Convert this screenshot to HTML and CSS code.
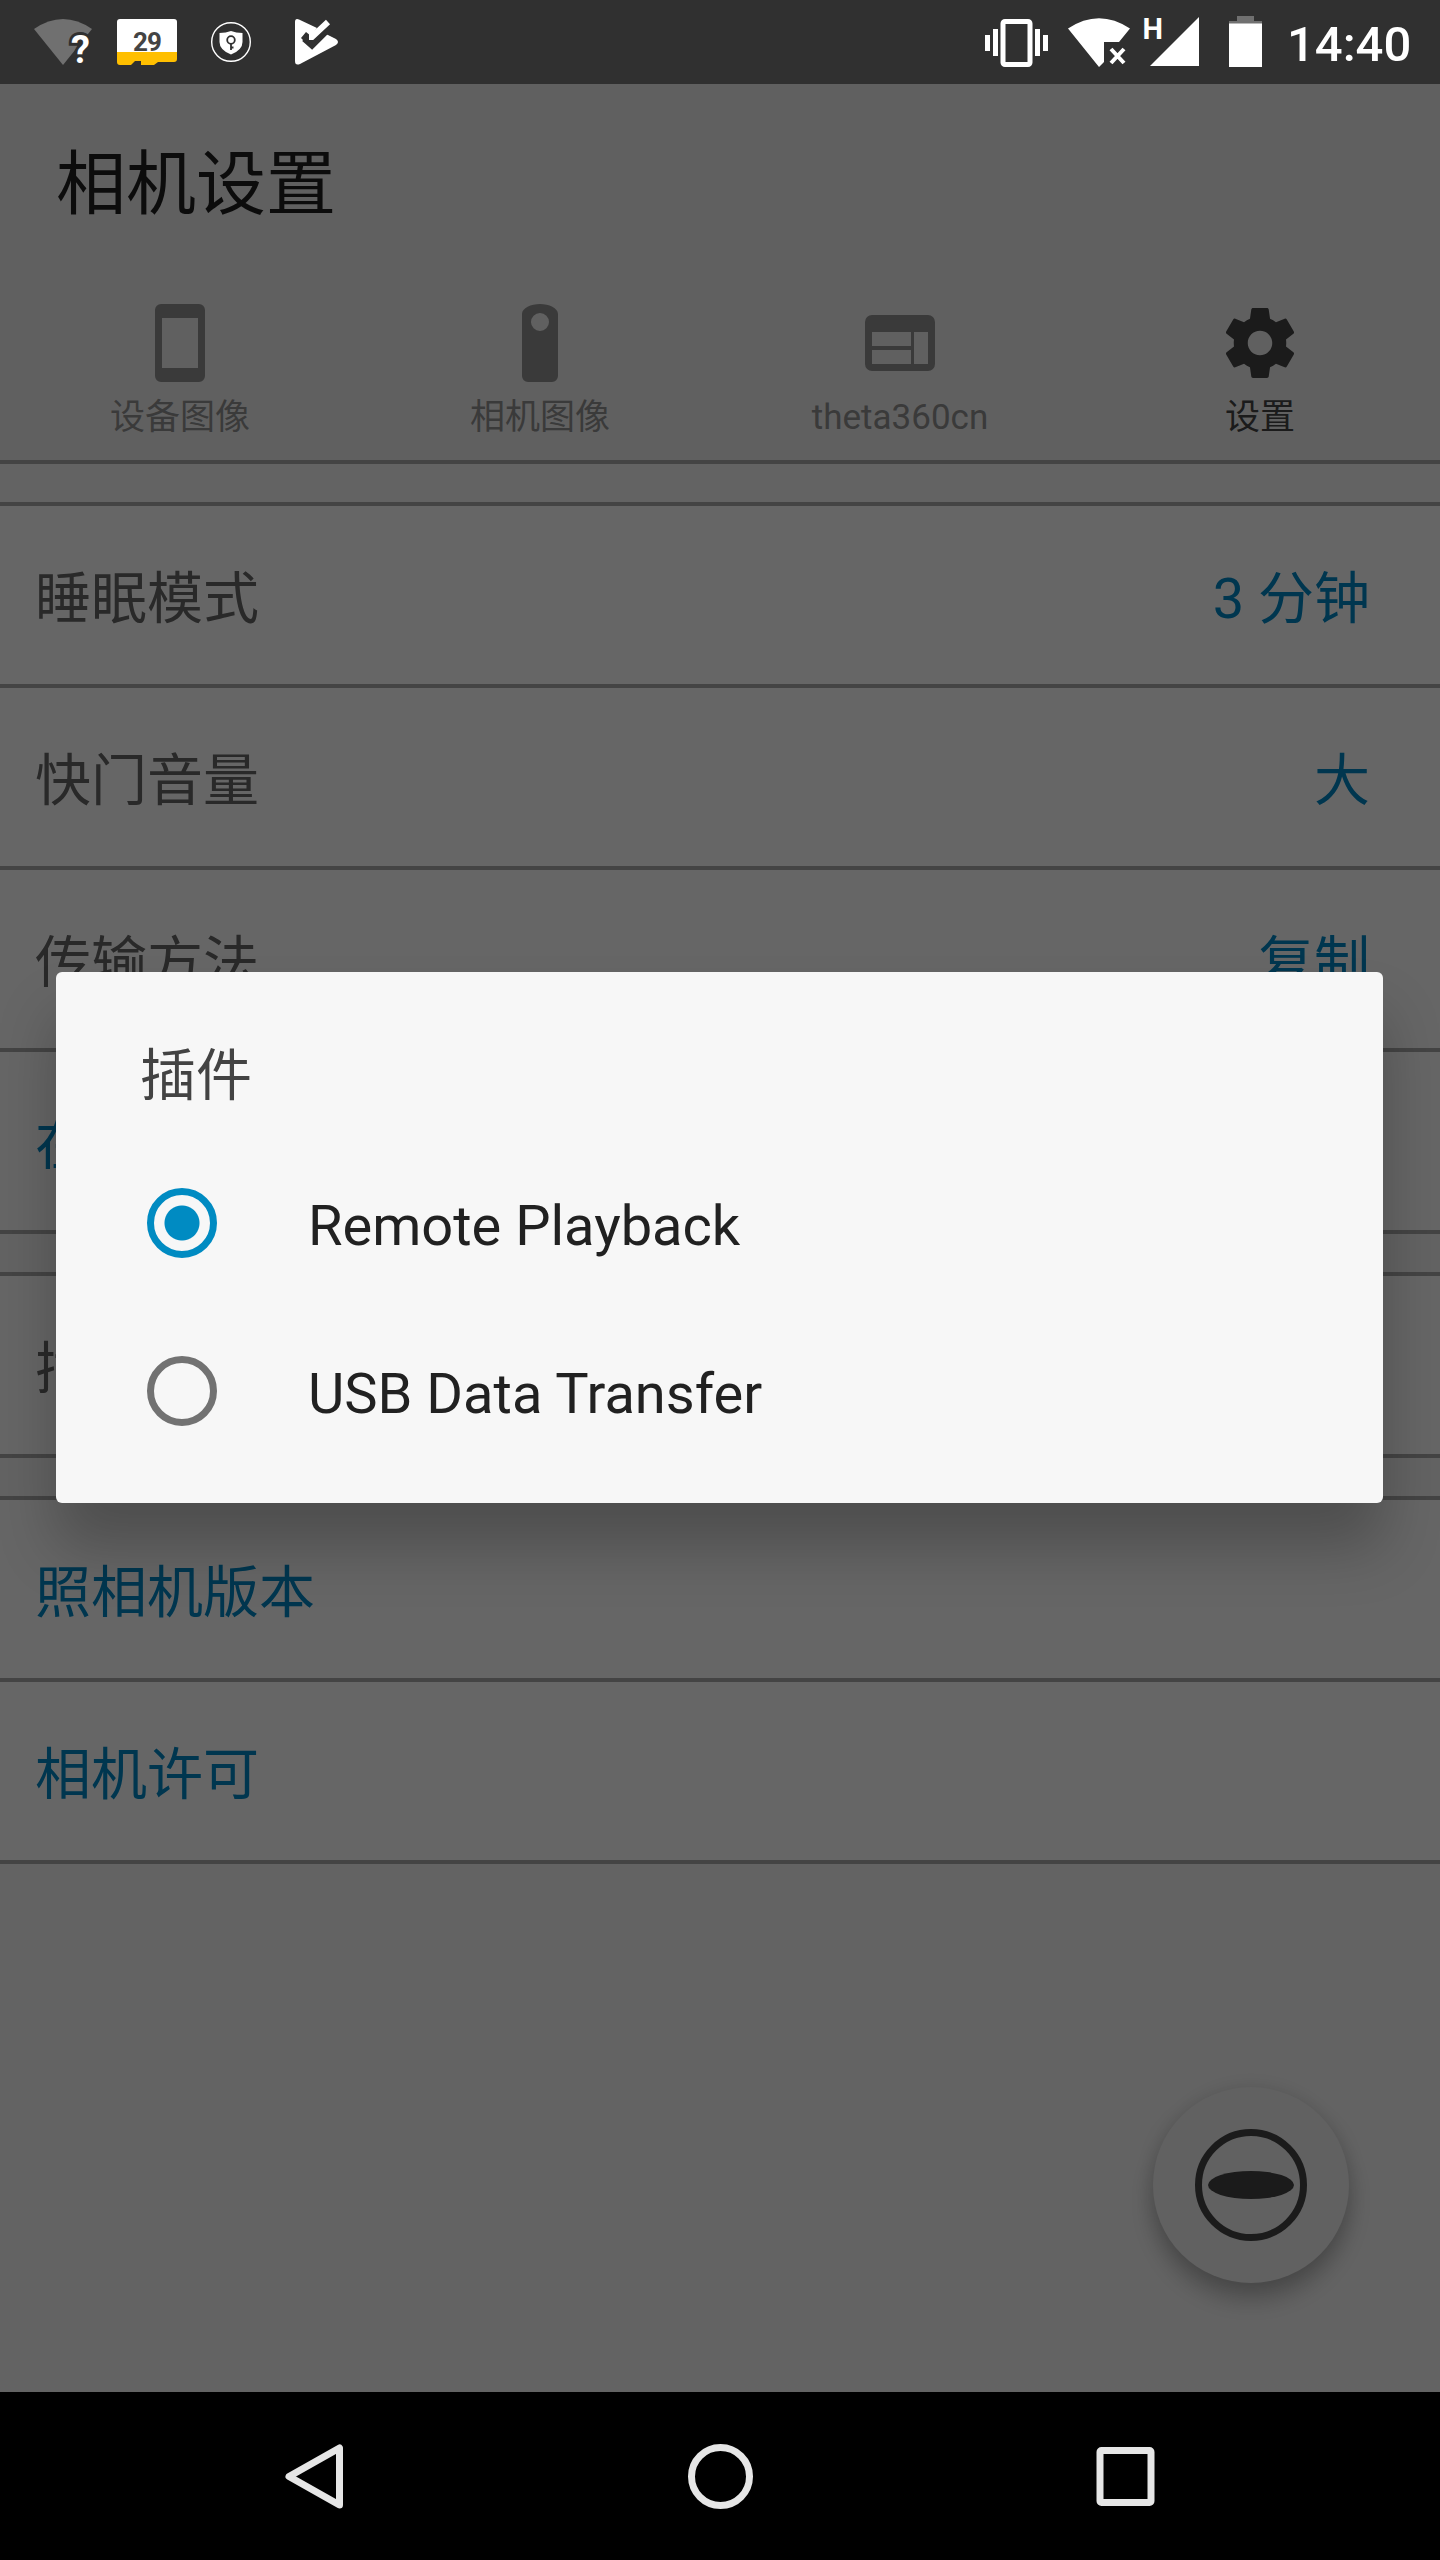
FILE: index.html
```html
<!DOCTYPE html>
<html lang="zh-CN">
<head>
    <meta charset="UTF-8">
    <meta name="viewport" content="width=device-width, initial-scale=1.0">
    <title>相机设置</title>
    <link rel="stylesheet" href="styles.css">
</head>
<body>
    <div class="screen">
        <header class="status-bar">
            <svg class="status-icons" width="400" height="84" viewBox="0 0 400 84">
                <!-- wifi without internet -->
                <path fill="#707070" d="M34 29Q63 9 92 29L63 65z"/>
                <text class="wifi-mark" x="71" y="63">?</text>
                <!-- calendar -->
                <path fill="#fff" d="M117 22a3 3 0 0 1 3-3h54a3 3 0 0 1 3 3v31h-60z"/>
                <path fill="#ffbf00" d="M117 52h60v7a3 3 0 0 1-3 3h-16l-4 3h-13v-4h-6l-4 4h-11a3 3 0 0 1-3-3z"/>
                <text class="calendar-day" x="147" y="51" text-anchor="middle">29</text>
                <!-- shield -->
                <circle cx="231" cy="42" r="19.3" fill="none" stroke="#fff" stroke-width="1.4"/>
                <path fill="#fff" d="M231 31q5 2 11.5 2v9q0 8-11.5 12.5q-11.5-4.5-11.5-12.5v-9q6.5 0 11.5-2z"/>
                <g fill="none" stroke="#303030" stroke-width="1.8">
                    <circle cx="231" cy="40" r="3.8"/>
                    <path d="M231 44v6M231 47.5h2.5"/>
                </g>
                <!-- play with check -->
                <path fill="#fff" d="M295 22q0-4 4-2.5L317 28l-6 8-5-4-5 6 10 10 15-14 10 5q4 3 0 6L300 64q-5 2-5-3z"/>
                <path fill="none" stroke="#303030" stroke-width="5.5" d="M304 39l8 7 14-14"/>
                <path fill="none" stroke="#fff" stroke-width="6" d="M309 37l3 0 16-15"/>
            </svg>
            <div class="status-right">
                <svg class="status-icons" width="300" height="84" viewBox="980 0 300 84">
                    <!-- vibrate -->
                    <path fill="#fff" d="M985 35h5v16h-5zM993 29h5v27h-5zM1035 29h5v27h-5zM1043 35h5v16h-5z"/>
                    <rect x="1003" y="21.5" width="27" height="43" rx="2" fill="none" stroke="#fff" stroke-width="5"/>
                    <!-- wifi disconnected -->
                    <path fill="#fff" d="M1068 28.5Q1099 8 1130 28.5L1119 42h-15v20l-5 5z"/>
                    <path fill="none" stroke="#fff" stroke-width="4" d="M1111 49l13 14M1124 49l-13 14"/>
                    <!-- mobile signal -->
                    <text class="signal-type" x="1142.5" y="39">H</text>
                    <path fill="#fff" d="M1199 17v49h-49z"/>
                    <!-- battery -->
                    <path fill="#707070" d="M1237 16h17v5h8v3h-33v-3h8z"/>
                    <path fill="#fff" d="M1229 23.5h33V67h-33z"/>
                </svg>
                <span class="clock">14:40</span>
            </div>
        </header>

        <main class="app">
            <div class="app-bar">
                <h1>相机设置</h1>
                <nav class="tabs">
                    <div class="tab">
                        <svg width="84" height="84" viewBox="0 0 84 84">
                            <path fill="currentColor" fill-rule="evenodd" d="M23 3h38a6 6 0 0 1 6 6v66a6 6 0 0 1-6 6H23a6 6 0 0 1-6-6V9a6 6 0 0 1 6-6zm1 14v50h36V17z"/>
                        </svg>
                        <span>设备图像</span>
                    </div>
                    <div class="tab">
                        <svg width="84" height="84" viewBox="0 0 84 84">
                            <path fill="currentColor" fill-rule="evenodd" d="M24 13c0-6 9-10 18-10s18 4 18 10v62a6 6 0 0 1-6 6H30a6 6 0 0 1-6-6zM42 12a9 9 0 1 0 0 18 9 9 0 0 0 0-18z"/>
                        </svg>
                        <span>相机图像</span>
                    </div>
                    <div class="tab">
                        <svg width="84" height="84" viewBox="0 0 84 84">
                            <path fill="currentColor" fill-rule="evenodd" d="M14 14h56a7 7 0 0 1 7 7v42a7 7 0 0 1-7 7H14a7 7 0 0 1-7-7V21a7 7 0 0 1 7-7zm0 17v14h39V31zm0 18v14h39V49zm42-18v32h14V31z"/>
                        </svg>
                        <span>theta360cn</span>
                    </div>
                    <div class="tab active">
                        <svg width="84" height="84" viewBox="0 0 24 24">
                            <path fill="currentColor" d="M19.43 12.98c.04-.32.07-.64.07-.98s-.03-.66-.07-.98l2.11-1.65c.19-.15.24-.42.12-.64l-2-3.46c-.12-.22-.39-.3-.61-.22l-2.49 1c-.52-.4-1.08-.73-1.69-.98l-.38-2.65C14.46 2.18 14.25 2 14 2h-4c-.25 0-.46.18-.49.42l-.38 2.65c-.61.25-1.17.59-1.69.98l-2.49-1c-.23-.09-.49 0-.61.22l-2 3.46c-.13.22-.07.49.12.64l2.11 1.65c-.04.32-.07.65-.07.98s.03.66.07.98l-2.11 1.65c-.19.15-.24.42-.12.64l2 3.46c.12.22.39.3.61.22l2.49-1c.52.4 1.08.73 1.69.98l.38 2.65c.03.24.24.42.49.42h4c.25 0 .46-.18.49-.42l.38-2.65c.61-.25 1.17-.59 1.69-.98l2.49 1c.23.09.49 0 .61-.22l2-3.46c.12-.22.07-.49-.12-.64l-2.11-1.65zM12 15.5c-1.93 0-3.5-1.57-3.5-3.5s1.57-3.5 3.5-3.5 3.5 1.57 3.5 3.5-1.57 3.5-3.5 3.5z"/>
                        </svg>
                        <span>设置</span>
                    </div>
                </nav>
            </div>

            <div class="gap"></div>
            <div class="row"><span>睡眠模式</span><span class="value">3 分钟</span></div>
            <div class="row"><span>快门音量</span><span class="value">大</span></div>
            <div class="row"><span>传输方法</span><span class="value">复制</span></div>
            <div class="row link"><span>在</span></div>
            <div class="gap"></div>
            <div class="row"><span>插件</span></div>
            <div class="gap"></div>
            <div class="row link"><span>照相机版本</span></div>
            <div class="row link"><span>相机许可</span></div>

            <div class="fab">
                <svg width="112" height="112" viewBox="0 0 112 112">
                    <circle cx="56" cy="56" r="52.5" fill="none" stroke="currentColor" stroke-width="7"/>
                    <ellipse cx="56" cy="56" rx="43" ry="14" fill="currentColor"/>
                </svg>
            </div>

            <div class="overlay">
                <div class="dialog">
                    <h2>插件</h2>
                    <label class="option">
                        <span class="radio checked"></span>
                        <span>Remote Playback</span>
                    </label>
                    <label class="option">
                        <span class="radio"></span>
                        <span>USB Data Transfer</span>
                    </label>
                </div>
            </div>
        </main>

        <footer class="nav-bar">
            <svg width="72" height="72" viewBox="0 0 72 72">
                <path fill="none" stroke="#e6e6e6" stroke-width="7" stroke-linejoin="round" d="M60.500 8v57L10 36.500z"/>
            </svg>
            <svg width="72" height="72" viewBox="0 0 72 72">
                <circle cx="36.500" cy="36.500" r="29" fill="none" stroke="#e6e6e6" stroke-width="7"/>
            </svg>
            <svg width="72" height="72" viewBox="0 0 72 72">
                <rect x="11" y="10.500" width="51" height="52" rx="1.500" fill="none" stroke="#e6e6e6" stroke-width="7"/>
            </svg>
        </footer>
    </div>
</body>
</html>
```
FILE: styles.css
```css
* {
    box-sizing: border-box;
}
body {
    margin: 0;
    background-color: #000;
    font-family: Roboto, "Noto Sans CJK SC", sans-serif;
}
.screen {
    width: 1440px;
    height: 2560px;
    display: flex;
    flex-direction: column;
    overflow: hidden;
}

/* Status bar */
.status-bar {
    height: 84px;
    flex-shrink: 0;
    display: flex;
    justify-content: space-between;
    background-color: #303030;
    color: #fff;
}
.status-icons {
    display: block;
}
.status-right {
    display: flex;
    padding-right: 28px;
}
.clock {
    width: 132px;
    padding-left: 7px;
    font-size: 49px;
    font-weight: 500;
    line-height: 89px;
    white-space: nowrap;
}
.wifi-mark {
    font-size: 38px;
    font-weight: 700;
    fill: #fff;
    stroke: #303030;
    stroke-width: 6px;
    paint-order: stroke;
}
.calendar-day {
    font-size: 26px;
    font-weight: 700;
    letter-spacing: -1px;
    fill: #444;
}
.signal-type {
    font-size: 29px;
    font-weight: 700;
    letter-spacing: -1px;
    fill: #fff;
}

/* App content */
.app {
    position: relative;
    flex: 1;
    background-color: #f8f8f8;
}
.app-bar {
    height: 380px;
    padding-top: 43px;
    background-color: #f0f0f0;
    border-bottom: 4px solid #aaa;
}
h1 {
    margin: 0;
    padding-left: 56px;
    height: 116px;
    font-size: 70px;
    font-weight: 400;
    line-height: 116px;
    color: #1e1e1e;
}
.tabs {
    display: flex;
    padding-top: 58px;
}
.tab {
    flex: 1;
    display: flex;
    flex-direction: column;
    align-items: center;
    color: #929292;
    font-size: 35px;
    line-height: 66px;
}
.tab.active {
    color: #444;
}
.gap {
    height: 42px;
    border-bottom: 4px solid #aaa;
}
.row {
    display: flex;
    justify-content: space-between;
    height: 182px;
    padding: 0 70px 0 35px;
    background-color: #fff;
    border-bottom: 4px solid #aaa;
    color: #666;
    font-size: 56px;
    line-height: 186px;
}
.row .value,
.row.link {
    color: #0088c6;
}
.fab {
    position: absolute;
    right: 91px;
    bottom: 109px;
    width: 196px;
    height: 196px;
    display: flex;
    align-items: center;
    justify-content: center;
    border-radius: 50%;
    background-color: #f2f2f2;
    color: #444;
    box-shadow: 0 16px 24px rgba(0, 0, 0, 0.25), 0 0 20px rgba(0, 0, 0, 0.1);
}

/* Dialog */
.overlay {
    position: absolute;
    inset: 0;
    padding: 888px 57px 0 56px;
    background-color: rgba(0, 0, 0, 0.6);
}
.dialog {
    height: 531px;
    padding: 62px 84px 0;
    border-radius: 6px;
    background-color: #f7f7f7;
    box-shadow: 0 44px 60px rgba(0, 0, 0, 0.24);
}
h2 {
    margin: 0;
    height: 105px;
    font-size: 56px;
    font-weight: 400;
    line-height: 84px;
    color: #434343;
}
.option {
    display: flex;
    align-items: center;
    gap: 91px;
    height: 168px;
    padding-left: 7px;
    font-size: 56px;
    color: #212121;
}
.option span:last-child {
    padding-top: 6px;
}
.radio {
    width: 70px;
    height: 70px;
    border: 7px solid #727272;
    border-radius: 50%;
}
.radio.checked {
    border-color: #008bc2;
    background: radial-gradient(circle, #008bc2 17px, transparent 18px);
}

/* Navigation bar */
.nav-bar {
    height: 168px;
    flex-shrink: 0;
    display: flex;
    align-items: center;
    justify-content: center;
    gap: 333px;
    background-color: #000;
}
```
